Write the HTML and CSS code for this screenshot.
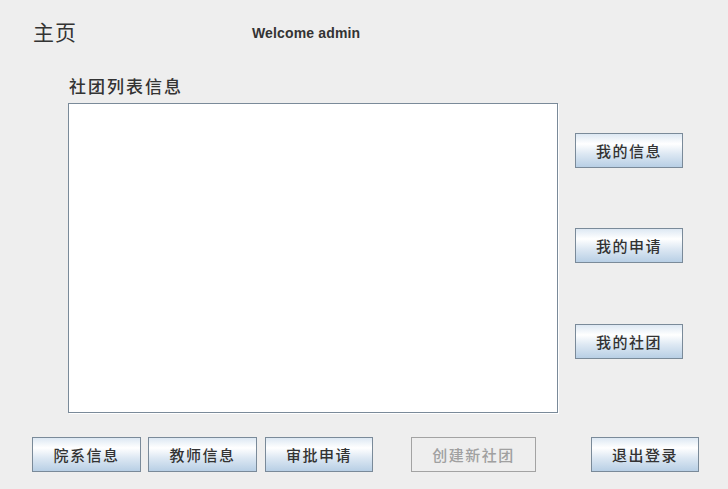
FILE: index.html
```html
<!DOCTYPE html>
<html lang="zh">
<head>
<meta charset="utf-8">
<title>主页</title>
<link rel="stylesheet" href="styles.css">
</head>
<body>
<div class="page">
  <div class="header">
    <div class="home">主页</div>
    <div class="welcome">Welcome admin</div>
  </div>
  <div class="main">
    <div class="left">
      <div class="label">社团列表信息</div>
      <div class="listbox"></div>
    </div>
    <div class="right">
      <button class="btn side">我的信息</button>
      <button class="btn side">我的申请</button>
      <button class="btn side last">我的社团</button>
    </div>
  </div>
  <div class="bottom">
    <button class="btn b1">院系信息</button>
    <button class="btn b2">教师信息</button>
    <button class="btn b3">审批申请</button>
    <button class="btn b4" disabled>创建新社团</button>
    <button class="btn b5">退出登录</button>
  </div>
</div>
</body>
</html>
```
FILE: styles.css
```css
* { box-sizing: border-box; }
html, body { margin: 0; padding: 0; }
body {
  background: #eeeeee;
  font-family: "Noto Sans CJK SC", "Liberation Sans", sans-serif;
  color: #333333;
}
.page {
  width: 728px;
  height: 489px;
  background: #eeeeee;
}
.header {
  display: flex;
  align-items: center;
  height: 40px;
  padding-top: 11px;
  padding-left: 33px;
  box-sizing: content-box;
}
.home {
  width: 219px;
  font-size: 21px;
  line-height: 1;
  color: #333;
  letter-spacing: 1px;
}
.welcome {
  font-family: "Liberation Sans", Arial, sans-serif;
  font-weight: bold;
  font-size: 14px;
  letter-spacing: 0.15px;
  color: #333;
  margin-top: 3px;
}
.main {
  display: flex;
  padding-left: 68px;
  margin-top: 23px;
}
.left {
  display: flex;
  flex-direction: column;
}
.label {
  height: 24px;
  line-height: 24px;
  font-size: 17px;
  font-weight: 500;
  letter-spacing: 2px;
  padding-left: 1px;
  margin-bottom: 5px;
  color: #333;
}
.listbox {
  width: 490px;
  height: 310px;
  background: #ffffff;
  border: 1px solid #7a8a99;
  box-shadow: 1px 1px 0 #ffffff;
}
.right {
  display: flex;
  flex-direction: column;
  gap: 60px;
  margin-left: 17px;
  padding-top: 59px;
}
.right .last { margin-top: 1px; }
.btn {
  display: flex;
  align-items: center;
  justify-content: center;
  height: 35px;
  padding: 0;
  margin: 0;
  border: 1px solid #7a8a99;
  background: linear-gradient(to bottom, #dde8f3 0%, #ffffff 30%, #dde8f3 60%, #b8cfe5 100%);
  font-family: "Noto Sans CJK SC", sans-serif;
  font-size: 15px;
  font-weight: 500;
  letter-spacing: 1.5px;
  color: #333333;
}
.side { width: 108px; }
.bottom {
  display: flex;
  margin-top: 24px;
  padding-left: 32px;
}
.b1 { width: 109px; }
.b2 { width: 109px; margin-left: 7px; }
.b3 { width: 108px; margin-left: 8px; }
.b4 {
  width: 125px;
  margin-left: 38px;
  background: #eeeeee;
  border-color: #a3a3a3;
  color: #a0a0a0;
}
.b5 { width: 108px; margin-left: 55px; }
```
